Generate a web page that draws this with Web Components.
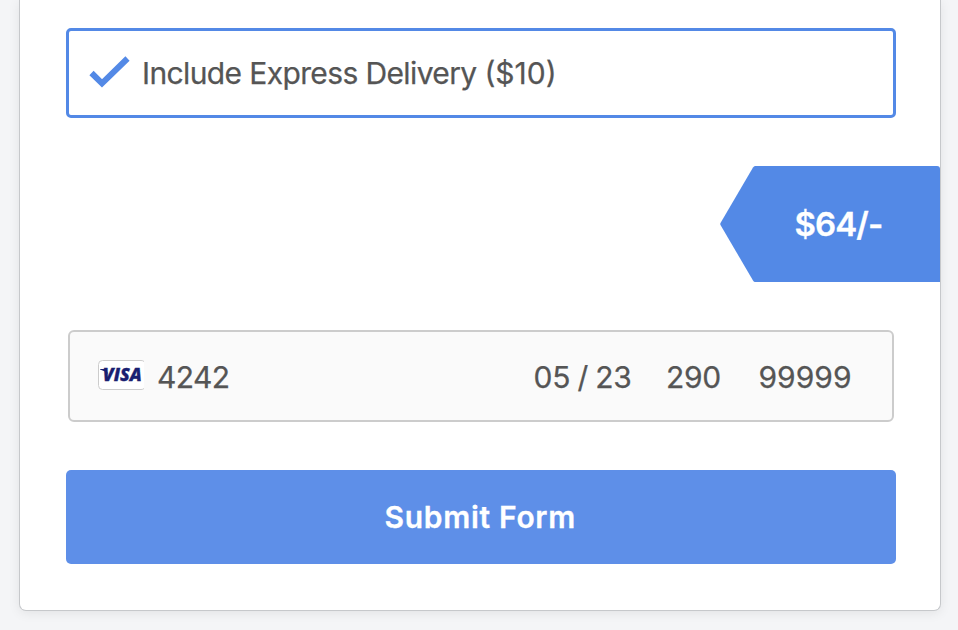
<!DOCTYPE html>
<html lang="en">
<head>
<meta charset="utf-8">
<title>Order form</title>
<style>
html,body{margin:0;height:630px;overflow:hidden;background:#f4f5f7;font-family:Inter,"Liberation Sans",sans-serif;color:#555}
</style>
</head>
<body>
<order-form>
  <check-option>Include Express Delivery <span>($10)</span></check-option>
  <price-tag>$64/-</price-tag>
  <card-field>
    <span slot="number">4242</span>
    <span slot="expiry">05 / 23</span>
    <span slot="cvc">290</span>
    <span slot="zip">99999</span>
  </card-field>
  <submit-button>Submit Form</submit-button>
</order-form>
<script>
const define = (name, html) => customElements.define(name, class extends HTMLElement {
  constructor() {
    super();
    this.attachShadow({ mode: 'open' }).innerHTML = html;
  }
});

define('order-form', `<style>
:host{display:flex;flex-direction:column;box-sizing:border-box;width:922px;height:611px;margin-left:19px;padding:28px 0 0 46px;background:#fff;border:1px solid #c6c8cb;border-top:0;border-radius:0 0 7px 7px;box-shadow:0 2px 12px rgba(0,0,0,.08)}
</style><slot></slot>`);

define('check-option', `<style>
:host{display:flex;align-items:center;box-sizing:border-box;width:830px;height:90px;padding-left:20px;border:3px solid #5389e6;border-radius:5px;font-size:30px;line-height:36px;letter-spacing:-.62px}
svg{width:42px;height:34px;margin-right:11px;flex:none}
span{-webkit-text-stroke:.25px #555}
::slotted(span){letter-spacing:0}
</style><svg viewBox="0 0 42 34"><path d="M2.500 17 13 27.300 38.500 2.500" fill="none" stroke="#5389e6" stroke-width="6"/></svg><span><slot></slot></span>`);

define('price-tag', `<style>
:host{display:grid;align-items:center;align-self:flex-end;box-sizing:border-box;width:220px;height:116px;margin-top:48px;color:#fff;font-size:33px;font-weight:600;line-height:40px;letter-spacing:-.9px}
svg,span{grid-area:1/1}
svg{width:220px;height:116px;display:block}
span{position:relative;padding-left:74.500px;-webkit-text-stroke:.3px #fff}
</style><svg viewBox="0 0 220 116"><path d="M35 0H217Q220 0 220 3V116H35Q34 116 33 114.500L.5 59Q0 58 .5 57L33 1.500Q34 0 35 0Z" fill="#5389e6"/></svg><span><slot></slot></span>`);

define('visa-badge', `<style>
:host{display:block;width:46px;height:30px;flex:none}
svg{display:block}
text{font:italic 800 17px "Open Sans",Inter,sans-serif}
</style><svg width="46" height="30" viewBox="0 0 46 30"><path d="M46 1.500Q45 .5 43 .5H4.500Q.5 .5 .5 4.500V25.500Q.5 29.500 4.500 29.500H43Q45 29.500 46 28.500" fill="#fff" stroke="#ccc"/><text x="4.800" y="21.300" textLength="39" lengthAdjust="spacingAndGlyphs" fill="#1a1f71" stroke="#1a1f71" stroke-width=".3">VISA</text><path d="M2 9H8L10 14Q7 10.500 2 9.500Z" fill="#1a1f71"/></svg>`);

define('card-field', `<style>
:host{display:grid;grid-template-columns:59px 376.500px 132.500px 92.500px auto;align-items:center;box-sizing:border-box;width:826px;height:92px;margin:48px 0 0 2px;padding-left:28px;border:2px solid #ccc;border-radius:6px;background:#fafafa;font-size:30px;line-height:36px}
visa-badge{margin-top:-3px}
::slotted(span){padding-top:2px;letter-spacing:-.3px;-webkit-text-stroke:.25px #555}
::slotted([slot=number]){letter-spacing:-.6px}
::slotted([slot=expiry]){word-spacing:-.8px}
::slotted([slot=zip]){letter-spacing:0}
</style><visa-badge></visa-badge><slot name="number"></slot><slot name="expiry"></slot><slot name="cvc"></slot><slot name="zip"></slot>`);

define('submit-button', `<style>
:host{display:flex;align-items:center;justify-content:center;box-sizing:border-box;width:830px;height:94px;margin-top:48px;padding-right:1.500px;border-radius:5px;background:#5e8fe8;color:#fff;font-size:30px;font-weight:600;line-height:36px;letter-spacing:.7px}
span{-webkit-text-stroke:.3px #fff}
</style><span><slot></slot></span>`);
</script>
</body>
</html>
